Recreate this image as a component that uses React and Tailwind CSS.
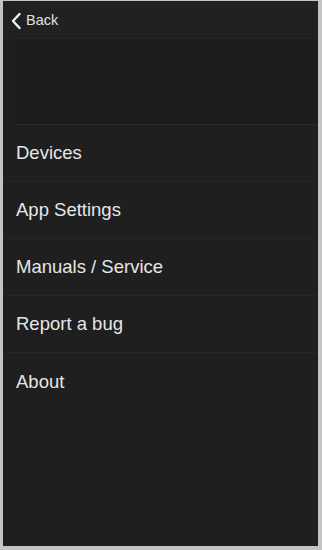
import React from "react";

const items = ["Devices", "App Settings", "Manuals / Service", "Report a bug", "About"];

export default function App() {
  return (
    <div className="w-[322px] h-[550px] bg-[#c4c4c4] pl-[3px] pt-px pr-[4px] pb-[4px]" style={{ fontFamily: '"Liberation Sans", Arial, sans-serif' }}>
      <div className="w-full h-full bg-[#1f1f1f] flex flex-col">
        <div className="h-[38px] shrink-0 flex items-center pl-[7px] pt-[3px] bg-[#212121] border-b border-[#262626]">
          <svg width="12" height="18" viewBox="0 0 12 18" className="mr-[4px]">
            <path d="M9.5 2 L3 9 L9.5 16" fill="none" stroke="#f2f2f2" strokeWidth="2.4" strokeLinecap="round" strokeLinejoin="round" />
          </svg>
          <span className="text-[14.5px] text-[#e0e0e0]">Back</span>
        </div>
        <div className="h-[86px] shrink-0 bg-[#1c1c1c] border-b border-[#2a2a2a] ml-[13px]" />
        <div className="flex flex-col">
          {items.map((t, i) => (
            <div key={t} className={"h-[57px] flex items-center pl-[13px] " + (i < items.length - 1 ? "border-b border-[#262626]" : "")}>
              <span className="text-[18.5px] text-[#e6e6e6]">{t}</span>
            </div>
          ))}
        </div>
      </div>
    </div>
  );
}
